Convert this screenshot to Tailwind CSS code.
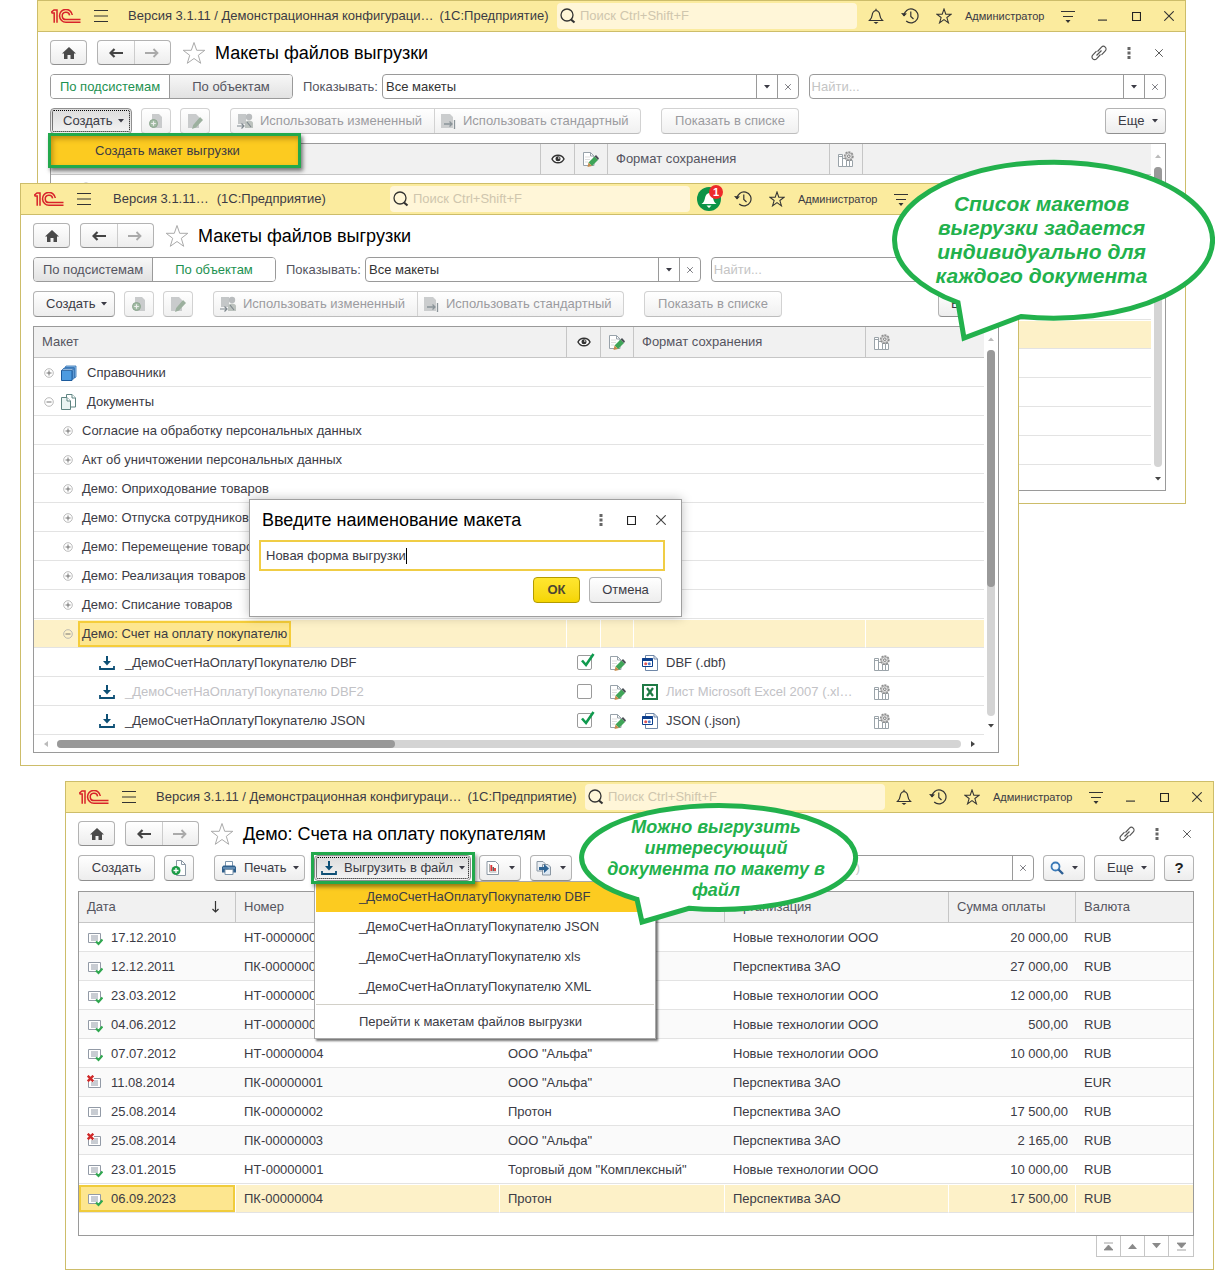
<!DOCTYPE html>
<html lang="ru">
<head>
  <meta charset="UTF-8" />
  <meta name="viewport" content="width=device-width, initial-scale=1.0" />
  <title>Макеты файлов выгрузки</title>
  <script src="https://cdn.jsdelivr.net/npm/@tailwindcss/browser@4"></script>
</head>
<body class="bg-white font-['Liberation_Sans',Arial,sans-serif] text-[13px] leading-4 text-[#3b3b45]">

  <!-- Icon sprite -->
  <svg class="hidden" xmlns="http://www.w3.org/2000/svg">
    <symbol id="logo" viewBox="0 0 30 14">
      <g fill="none" stroke="#d8232a" stroke-width="1.5">
        <path d="M0 3.500L3 1H6V13.800M0.500 4H3.200V13.800" />
        <path d="M21.300 6A6.400 6.400 0 1 0 15 13.200H29.500" />
        <path d="M18.600 6.300A3.700 3.700 0 1 0 15 10.600H29.500" />
      </g>
    </symbol>
    <symbol id="burger" viewBox="0 0 14 12"><path d="M0 .5h14M0 6h14M0 11.5h14" stroke="#333" stroke-width="1" /></symbol>
    <symbol id="search" viewBox="0 0 16 16"><circle cx="7" cy="7" r="6" fill="none" stroke="#333" stroke-width="1.3" /><path d="M11 11.500l3.500 3" stroke="#333" stroke-width="2.2" /></symbol>
    <symbol id="bell" viewBox="0 0 16 16"><path d="M1.500 12.500h13c-2-2-2.500-3.500-2.700-5.500-.2-2.500-1.300-4-3.800-4.500-2.500.5-3.600 2-3.800 4.500-.2 2-.7 3.500-2.700 5.500zM8 .8v1.700" fill="none" stroke="#333" stroke-width="1.200" /><path d="M5.500 14h5L8 16z" fill="#333" /></symbol>
    <symbol id="bell-on" viewBox="0 0 24 24"><circle cx="12" cy="12" r="12" fill="#0c9347" /><path d="M4.500 17h15c-2.500-1.500-3-4-3.500-6-.5-2.500-1.500-4.500-4-5-2.500.5-3.500 2.500-4 5-.5 2-1 4.500-3.500 6zM9.500 18.500h5L12 21z" fill="#fff" /></symbol>
    <symbol id="history" viewBox="0 0 18 16"><path d="M3 8A7 7 0 1 1 5.200 13M3 8A7 7 0 0 1 4.300 4M9.800 3.500V8.500L12.500 11" fill="none" stroke="#333" stroke-width="1.200" /><path d="M0 5l3 3.500L6 5.500z" fill="#333" /></symbol>
    <symbol id="star" viewBox="0 0 24 24"><path d="M12 1.500l2.700 7.800h8.100l-6.500 5 2.400 8L12 17.500l-6.700 4.800 2.400-8-6.500-5h8.100z" fill="none" stroke="currentColor" stroke-width="var(--sw,1)" /></symbol>
    <symbol id="service" viewBox="0 0 14 13"><path d="M0 1.500h14M2 6.500h10" stroke="#333" stroke-width="1.200" /><path d="M4.500 10h5L7 13z" fill="#333" /></symbol>
    <symbol id="min" viewBox="0 0 10 10"><path d="M0 9h10" stroke="#333" stroke-width="1.300" /></symbol>
    <symbol id="max" viewBox="0 0 10 10"><path d="M.6.6h8.800v8.800H.6z" fill="none" stroke="#222" stroke-width="1.200" /></symbol>
    <symbol id="close" viewBox="0 0 10 10"><path d="M.3.3l9.400 9.400M9.700.3L.3 9.700" stroke="currentColor" stroke-width="1.100" /></symbol>
    <symbol id="home" viewBox="0 0 14 12"><path d="M7 0L0 6.500h2V12h3.500V8h3v4H12V6.500h2z" fill="#4a4a4a" /></symbol>
    <symbol id="back" viewBox="0 0 14 10"><path d="M2 5h12M5.500 1L1.500 5l4 4" fill="none" stroke="currentColor" stroke-width="2.200" /></symbol>
    <symbol id="fwd" viewBox="0 0 14 10"><path d="M12 5H0M8.500 1l4 4-4 4" fill="none" stroke="currentColor" stroke-width="1.800" /></symbol>
    <symbol id="link" viewBox="0 0 16 16"><g fill="none" stroke="#555" stroke-width="1.200"><path d="M6.500 6.500L10.500 2.200a2.600 2.600 0 0 1 3.800 3.600L10.500 9.800M9 10.800" /><path d="M9.500 9.500L5.500 13.800a2.600 2.600 0 0 1-3.800-3.600L5.500 6.200M5.500 10.500l5-5" /></g></symbol>
    <symbol id="dots" viewBox="0 0 4 12"><path d="M.5 0h3v3h-3zM.5 4.500h3v3h-3zM.5 9h3v3h-3z" fill="#666" /></symbol>
    <symbol id="down" viewBox="0 0 6 4"><path d="M0 0h6L3 3.500z" fill="currentColor" /></symbol>
    <symbol id="up" viewBox="0 0 6 4"><path d="M0 4h6L3 .5z" fill="currentColor" /></symbol>
    <symbol id="doc-plus" viewBox="0 0 16 16"><path d="M5.500.5h5L14.500 4.500v11h-9z" fill="#fff" stroke="#8a97a3" /><path d="M10.500.5v4h4" fill="none" stroke="#8a97a3" /><circle cx="5" cy="10.500" r="4.500" fill="#1b9b46" /><path d="M5 8v5M2.500 10.500h5" stroke="#fff" stroke-width="1.300" /></symbol>
    <symbol id="doc-plus-off" viewBox="0 0 16 16"><path d="M4 1h7l3 3v11H4z" fill="#c9cbcc" /><circle cx="5.500" cy="10.500" r="4" fill="#a3bda5" stroke="#8ca58f" /><path d="M5.500 8.200v4.600M3.200 10.500h4.600" stroke="#eee" stroke-width="1.200" /></symbol>
    <symbol id="doc-edit-off" viewBox="0 0 16 16"><path d="M1 1h8l3 3v11H1z" fill="#c9cbcc" /><path d="M13 4l3 3-7 7.500-4 1.500 1.200-4z" fill="#9cb09e" /></symbol>
    <symbol id="doc-edit" viewBox="0 0 16 16"><path d="M.5 1.500h7l3.500 3.500v9.500H.5z" fill="#fff" stroke="#98a2aa" /><path d="M7.500 1.500V5H11" fill="none" stroke="#98a2aa" /><path d="M2 6h5M2 8.500h5M2 11h3" stroke="#ddd" /><path d="M11.500 5.500l3.500 3.500-6 6-3.500-3.500z" fill="#3fa558" /><path d="M11.500 5.500L13 4l3 3.300L15 9z" fill="#4a4f55" /><path d="M5.500 11.500L9 15l-4.500 1z" fill="#c58b4a" /></symbol>
    <symbol id="doc-user" viewBox="0 0 16 16"><path d="M1 1h8v10H1z" fill="#c4c7c8" /><circle cx="12" cy="4" r="3.200" fill="#b9bcbe" /><path d="M8 15V10c0-3.500 8-3.500 8 0v5z" fill="#bcc2be" /><path d="M0 13h7M4.500 10.500L7 13l-2.500 2.500M10 9l4 5" stroke="#7f888e" fill="none" stroke-width="1.200" /></symbol>
    <symbol id="doc-std" viewBox="0 0 16 16"><path d="M1 1h9l3 3v11H1z" fill="#cbcdce" /><path d="M4 11h8M9.500 8.500L12 11l-2.500 2.500M14.500 7v9" stroke="#8b9499" fill="none" stroke-width="1.300" /></symbol>
    <symbol id="eye" viewBox="0 0 14 10"><path d="M1 5c2.500-5 9.500-5 12 0-2.500 5-9.500 5-12 0z" fill="#fff" stroke="#333" stroke-width="1.500" /><circle cx="7" cy="4.800" r="2.500" fill="#333" /><circle cx="7.800" cy="4" r=".8" fill="#fff" /></symbol>
    <symbol id="columns" viewBox="0 0 16 16"><path d="M.5 3.500h4v12h-4zM4.500 7.500h4v8h-4zM8.500 9.500h6v6h-6zM11.500 10v5" fill="#fff" stroke="#9aa3a9" /><path d="M1 5.500h3" stroke="#9aa3a9" /><circle cx="10.800" cy="5.200" r="4" fill="#ddd" stroke="#8f8f8f" stroke-width="1.800" stroke-dasharray="2 1" /><circle cx="10.800" cy="5.200" r="3.200" fill="#e8e8e8" stroke="#999" stroke-width=".7" /><circle cx="10.800" cy="5.200" r="1.300" fill="#fff" stroke="#777" /></symbol>
    <symbol id="plus" viewBox="0 0 10 10"><circle cx="5" cy="5" r="4.300" fill="#fff" stroke="#aaa" stroke-width=".8" /><path d="M2.500 5h5M5 2.500v5" stroke="#666" stroke-width=".9" /></symbol>
    <symbol id="minus" viewBox="0 0 10 10"><circle cx="5" cy="5" r="4.300" fill="none" stroke="#aaa" stroke-width=".8" /><path d="M2.500 5h5" stroke="#666" stroke-width=".9" /></symbol>
    <symbol id="books" viewBox="0 0 16 16"><path d="M5 1h10v11l-1.500 1V2.500H4z" fill="#9cc6ee" stroke="#2a6cb0" stroke-width=".8" /><path d="M3 3h10v10.500l-1.500 1V4.500H2z" fill="#85b8ea" stroke="#2a6cb0" stroke-width=".8" /><path d="M.5 5.500h10.500v10H.5z" fill="#4d9be0" stroke="#1c5a9c" /><path d="M.5 5.500L2 4h10.500L11 5.500z" fill="#d6e9fa" stroke="#1c5a9c" stroke-width=".7" /></symbol>
    <symbol id="docs" viewBox="0 0 16 16"><g fill="#fff" stroke="#5f8582"><path d="M5.500.5h5.500l3.500 3.500v9h-9z" /><path d="M11 .5V4h3.500" /><path d="M.5 3.500h5.500l3.500 3.500v8.500h-9z" fill="#eaf4f3" /><path d="M6 3.500V7h3.500" /></g></symbol>
    <symbol id="load" viewBox="0 0 16 14"><path d="M1 10v3h14v-3" fill="none" stroke="#0d4f75" stroke-width="1.800" /><path d="M8 0v6" stroke="#0d4f75" stroke-width="2" /><path d="M4 5h8L8 9.500z" fill="#0d4f75" /></symbol>
    <symbol id="file-dbf" viewBox="0 0 16 16"><path d="M3.500.5h8.500l3.500 3.500v11.500h-12z" fill="#fff" stroke="#6f87a8" /><path d="M12 .5V4h3.500" fill="none" stroke="#6f87a8" /><path d="M.5 3.500h10v8H.5z" fill="#fff" stroke="#0d3f8c" /><path d="M.5 3h10v3H.5z" fill="#0d3f8c" /><circle cx="3.700" cy="8.700" r="1.500" fill="#e05555" /><circle cx="7.300" cy="8.700" r="1.500" fill="#4b7bd0" /></symbol>
    <symbol id="file-xls" viewBox="0 0 16 16"><path d="M1 1h14v14H1z" fill="#fff" stroke="#1f7a45" stroke-width="2" /><path d="M5 4l6 8M11 4l-6 8" stroke="#1f7a45" stroke-width="2.200" /></symbol>
    <symbol id="print" viewBox="0 0 16 16"><path d="M4.500 1.500h7v5h-7z" fill="#fff" stroke="#7a94ab" /><path d="M2.500 5.500h11l1.500 1.500v5.500H1V7z" fill="#2e5f8c" /><path d="M2 8h12" stroke="#8fb4d4" /><path d="M4 9.500h8v5H4z" fill="#fff" stroke="#7a94ab" /></symbol>
    <symbol id="report" viewBox="0 0 14 16"><path d="M1 1.500h8.500L12.500 4.500v10H1z" fill="#fff" stroke="#8a97a3" /><path d="M3.500 4v8h7" fill="none" stroke="#aaa" /><path d="M5.300 5v6M9 8v3" stroke="#d33" stroke-width="1.800" /><path d="M7.200 7v4" stroke="#444" stroke-width="1.300" /></symbol>
    <symbol id="based" viewBox="0 0 16 16"><path d="M1 1.500h6l2 2V11H1z" fill="#e9eef3" stroke="#8a97a3" /><path d="M6.500 4.500h5.500l2.500 2.500v8h-8z" fill="#dbe7f2" stroke="#8a97a3" /><path d="M3 7h5V4l5 4.500L8 13v-3H3z" fill="#2e6494" /></symbol>
    <symbol id="find" viewBox="0 0 14 14"><circle cx="5.500" cy="5.500" r="4" fill="#f2f8fd" stroke="#3a7ab8" stroke-width="1.800" /><path d="M8.500 8.500L13 13" stroke="#2d5f94" stroke-width="2.400" /></symbol>
    <symbol id="row-doc" viewBox="0 0 16 16"><path d="M1.500 3.500h12v9h-12z" fill="#fff" stroke="#929aa6" /><path d="M4 6h7M4 8h7M4 10h7" stroke="#929aa6" /></symbol>
    <symbol id="row-ok" viewBox="0 0 16 16"><use href="#row-doc" /><path d="M9 11.500l2.500 2.500L15.500 9.500" fill="none" stroke="#2fa84f" stroke-width="2.200" /></symbol>
    <symbol id="row-del" viewBox="0 0 16 16"><use href="#row-doc" /><path d="M0 0h7v7H0z" fill="#fff" /><path d="M.7.700l5.600 5.600M6.300.7L.7 6.300" stroke="#cf2a2a" stroke-width="2.400" /></symbol>
    <symbol id="check" viewBox="0 0 16 16"><path d="M3 7.500l4 4.500L14.500 1" fill="none" stroke="#0f9a4e" stroke-width="2.600" /></symbol>
  </svg>

  <main class="relative pb-4">
    <section class="relative grid">

      <!-- Window: templates by subsystem -->
      <article class="[grid-area:1/1] self-start ml-[37px] mr-[41px] border border-[#cdbd6a] bg-white">
        <header class="flex h-[31px] items-center border-b border-[#cdbd6a] bg-[#fbeb9e] pl-[13px]">
          <svg class="h-[14px] w-[30px] shrink-0"><use href="#logo" /></svg>
          <button class="ml-[13px] shrink-0" aria-label="Меню"><svg class="h-3 w-[14px]"><use href="#burger" /></svg></button>
          <span class="ml-5 whitespace-nowrap">Версия 3.1.11 / Демонстрационная конфигураци…</span>
          <span class="ml-[6px] whitespace-nowrap">(1С:Предприятие)</span>
          <label class="ml-auto flex h-[26px] w-[300px] shrink-0 items-center gap-1 rounded-sm bg-[#fff6d8] pl-[3px]">
            <svg class="size-4"><use href="#search" /></svg>
            <input type="text" placeholder="Поиск Ctrl+Shift+F" aria-label="Поиск" class="min-w-0 flex-1 outline-none placeholder:text-[#cfc6ae]" />
          </label>
          <button class="ml-0.5 grid w-[34px] shrink-0 place-items-center" aria-label="Оповещения"><svg class="size-4"><use href="#bell" /></svg></button>
          <button class="grid w-[34px] shrink-0 place-items-center" aria-label="История"><svg class="h-4 w-[18px]"><use href="#history" /></svg></button>
          <button class="grid w-[34px] shrink-0 place-items-center text-[#333] [--sw:1.6]" aria-label="Избранное"><svg class="size-4"><use href="#star" /></svg></button>
          <span class="w-[90px] shrink-0 px-1 text-[11px]">Администратор</span>
          <button class="grid w-[34px] shrink-0 place-items-center" aria-label="Сервис"><svg class="h-[13px] w-[14px]"><use href="#service" /></svg></button>
          <button class="grid w-[34px] shrink-0 place-items-center" aria-label="Свернуть"><svg class="size-[9px]"><use href="#min" /></svg></button>
          <button class="grid w-[34px] shrink-0 place-items-center" aria-label="Развернуть"><svg class="size-[9px]"><use href="#max" /></svg></button>
          <button class="grid w-8 shrink-0 place-items-center text-[#333]" aria-label="Закрыть"><svg class="size-[10px]"><use href="#close" /></svg></button>
        </header>
        <div class="pl-3 pr-[19px] pb-3 pt-2">
          <div class="flex h-[25px] items-center">
            <button class="grid h-[25px] w-[37px] place-items-center rounded-sm border border-[#b3b3b3] border-b-[#8f8f8f] bg-linear-to-b from-white to-[#ededed]" aria-label="Домой"><svg class="h-3 w-[14px]"><use href="#home" /></svg></button>
            <div class="ml-[10px] flex h-[25px] w-[74px] rounded-sm border border-[#b3b3b3] border-b-[#8f8f8f] bg-linear-to-b from-white to-[#ededed]">
              <button class="grid flex-1 place-items-center border-r border-[#ccc] text-[#444]" aria-label="Назад"><svg class="h-[10px] w-[14px]"><use href="#back" /></svg></button>
              <button class="grid flex-1 place-items-center text-[#aaa]" aria-label="Вперед"><svg class="h-[10px] w-[14px]"><use href="#fwd" /></svg></button>
            </div>
            <svg class="ml-[11px] size-6 text-[#aaa]"><use href="#star" /></svg>
            <h1 class="ml-[9px] whitespace-nowrap text-[18px] leading-6 text-black">Макеты файлов выгрузки</h1>
            <div class="-mr-2 ml-auto flex items-center">
              <button class="grid w-[30px] place-items-center" aria-label="Ссылка"><svg class="size-4"><use href="#link" /></svg></button>
              <button class="grid w-[30px] place-items-center" aria-label="Еще"><svg class="h-3 w-1"><use href="#dots" /></svg></button>
              <button class="grid h-6 w-[30px] place-items-center text-[#444]" aria-label="Закрыть"><svg class="size-2"><use href="#close" /></svg></button>
            </div>
          </div>
          <div class="mt-[9px] flex h-[25px] items-stretch">
            <div class="flex w-[243px] shrink-0 overflow-hidden rounded-sm border border-[#9a9a9a]">
              <button class="w-[119px] border-r border-[#9a9a9a] bg-white text-[#1d9150]">По подсистемам</button>
              <button class="flex-1 bg-linear-to-b from-[#f7f7f7] to-[#e2e2e2] text-[#55555f]">По объектам</button>
            </div>
            <label for="show1" class="ml-[10px] w-[79px] shrink-0 self-center text-[#55555f]">Показывать:</label>
            <div class="flex min-w-0 flex-[7] rounded-sm border border-[#9a9a9a]">
              <select id="show1" class="min-w-0 flex-1 appearance-none px-[3px] text-[#333] outline-none"><option>Все макеты</option></select>
              <button class="grid w-[21px] place-items-center border-l border-[#9a9a9a]" aria-label="Выбрать"><svg class="h-1 w-[6px]"><use href="#down" /></svg></button>
              <button class="grid w-[21px] place-items-center border-l border-[#9a9a9a]" aria-label="Очистить"><svg class="size-[6px]"><use href="#close" /></svg></button>
            </div>
            <div class="ml-[10px] flex min-w-0 flex-[6] rounded-sm border border-[#9a9a9a]">
              <input type="text" placeholder="Найти..." aria-label="Найти" class="min-w-0 flex-1 px-0.5 outline-none placeholder:text-[#c4c4c4]" />
              <button class="grid w-[21px] place-items-center border-l border-[#9a9a9a]" aria-label="Выбрать"><svg class="h-1 w-[6px]"><use href="#down" /></svg></button>
              <button class="grid w-[21px] place-items-center border-l border-[#9a9a9a]" aria-label="Очистить"><svg class="size-[6px]"><use href="#close" /></svg></button>
            </div>
          </div>
          <div class="mt-[9px] flex h-[26px] items-stretch">
            <div class="relative w-[82px] shrink-0">
              <button class="flex h-full w-full items-center gap-[6px] rounded-sm border border-[#8f8f8f] bg-linear-to-b from-[#dcdcdc] to-[#f4f4f4] pl-3 outline-1 outline-dotted -outline-offset-3 outline-black">Создать <svg class="h-1 w-[6px]"><use href="#down" /></svg></button>
              <!-- Create menu -->
              <div class="absolute -left-[2px] top-[25px] z-10 w-[253px] border-3 border-[#22a94c] bg-[#fccb20] shadow-[2px_3px_4px_rgba(0,0,0,0.5),inset_2px_3px_5px_rgba(120,80,0,0.45)]">
                <button class="block h-[29px] w-full pl-11 text-left">Создать макет выгрузки</button>
              </div>
            </div>
            <button disabled class="ml-[9px] grid w-[30px] shrink-0 place-items-center rounded-sm border border-[#d2d2d2] border-b-[#bdbdbd] bg-linear-to-b from-white to-[#f0f0f0]" aria-label="Добавить"><svg class="size-4"><use href="#doc-plus-off" /></svg></button>
            <button disabled class="ml-[9px] grid w-[30px] shrink-0 place-items-center rounded-sm border border-[#d2d2d2] border-b-[#bdbdbd] bg-linear-to-b from-white to-[#f0f0f0]" aria-label="Изменить"><svg class="size-4"><use href="#doc-edit-off" /></svg></button>
            <div class="ml-5 flex shrink-0 rounded-sm border border-[#d2d2d2] border-b-[#bdbdbd] bg-linear-to-b from-white to-[#f0f0f0] text-[#9b9b9f]">
              <button disabled class="flex w-[204px] items-center gap-[7px] whitespace-nowrap border-r border-[#d2d2d2] pl-[6px]"><svg class="size-4"><use href="#doc-user" /></svg>Использовать измененный</button>
              <button disabled class="flex w-[205px] items-center gap-[7px] whitespace-nowrap pl-[5px]"><svg class="size-4"><use href="#doc-std" /></svg>Использовать стандартный</button>
            </div>
            <button disabled class="ml-5 w-[138px] shrink-0 whitespace-nowrap rounded-sm border border-[#d2d2d2] border-b-[#bdbdbd] bg-linear-to-b from-white to-[#f0f0f0] text-[#9b9b9f]">Показать в списке</button>
            <button class="ml-auto flex w-[61px] shrink-0 items-center gap-2 rounded-sm border border-[#b3b3b3] border-b-[#8f8f8f] bg-linear-to-b from-white to-[#ededed] pl-3">Еще <svg class="h-1 w-[6px]"><use href="#down" /></svg></button>
          </div>
          <div class="mt-[9px] flex border border-[#9a9a9a] pb-[25px]">
            <table class="w-full table-fixed border-separate border-spacing-0 text-left [&_td]:h-[29px] [&_td]:border-b [&_td]:border-[#e3e3e3] [&_td]:p-0 [&_th]:h-[31px] [&_th]:border-b [&_th]:border-[#c6c6c6] [&_th]:bg-[#f1f1f1] [&_th]:p-0 [&_th]:font-normal [&_th]:text-[#55555f] [&_th:not(:last-child)]:border-r">
              <colgroup><col /><col class="w-[34px]" /><col class="w-[33px]" /><col class="w-[222px]" /><col class="w-[33px]" /><col class="w-[288px]" /></colgroup>
              <thead>
                <tr><th></th><th><svg class="mx-auto h-[10px] w-[14px]"><use href="#eye" /></svg></th><th><svg class="mx-auto size-4"><use href="#doc-edit" /></svg></th><th><span class="pl-2">Формат сохранения</span></th><th><svg class="mx-auto size-4"><use href="#columns" /></svg></th><th></th></tr>
              </thead>
              <tbody>
                <tr><td><svg class="ml-7 size-[14px]"><use href="#plus" /></svg></td><td colspan="5"></td></tr>
                <tr><td colspan="6"></td></tr>
                <tr><td colspan="6"></td></tr>
                <tr><td colspan="6"></td></tr>
                <tr><td colspan="6"></td></tr>
                <tr class="[&_td]:border-t [&_td]:border-t-white [&_td]:bg-[#fdf1c8]"><td colspan="6"></td></tr>
                <tr><td colspan="6"></td></tr>
                <tr><td colspan="6"></td></tr>
                <tr><td colspan="6"></td></tr>
                <tr><td colspan="6"></td></tr>
              </tbody>
            </table>
            <div class="-mb-[25px] flex w-[14px] shrink-0 flex-col items-center">
              <span class="grid h-[23px] place-items-center text-[#bbb]"><svg class="h-1 w-[6px]"><use href="#up" /></svg></span>
              <div class="w-2 flex-1 rounded-full bg-[#d4d4d4]"><div class="h-20 rounded-full bg-[#999]"></div></div>
              <span class="grid h-[23px] place-items-center text-[#444]"><svg class="h-1 w-[6px]"><use href="#down" /></svg></span>
            </div>
          </div>
        </div>
      </article>

      <!-- Window: templates by object -->
      <article class="relative [grid-area:1/1] self-start mt-[183px] ml-5 mr-[208px] border border-[#cdbd6a] bg-white">
        <header class="flex h-[31px] items-center border-b border-[#cdbd6a] bg-[#fbeb9e] pl-[13px]">
          <svg class="h-[14px] w-[30px] shrink-0"><use href="#logo" /></svg>
          <button class="ml-[13px] shrink-0" aria-label="Меню"><svg class="h-3 w-[14px]"><use href="#burger" /></svg></button>
          <span class="ml-[22px] whitespace-nowrap">Версия 3.1.11…</span>
          <span class="ml-2 whitespace-nowrap">(1С:Предприятие)</span>
          <label class="ml-auto flex h-[26px] w-[300px] shrink-0 items-center gap-1 rounded-sm bg-[#fff6d8] pl-[3px]">
            <svg class="size-4"><use href="#search" /></svg>
            <input type="text" placeholder="Поиск Ctrl+Shift+F" aria-label="Поиск" class="min-w-0 flex-1 outline-none placeholder:text-[#cfc6ae]" />
          </label>
          <button class="relative ml-0.5 grid w-[34px] shrink-0 place-items-center" aria-label="Оповещения">
            <svg class="size-6"><use href="#bell-on" /></svg>
            <span class="absolute -top-[2px] left-[17px] size-[14px] rounded-full bg-[#ee2a2a] text-center text-[11px] font-bold leading-[14px] text-white">1</span>
          </button>
          <button class="grid w-[34px] shrink-0 place-items-center" aria-label="История"><svg class="h-4 w-[18px]"><use href="#history" /></svg></button>
          <button class="grid w-[34px] shrink-0 place-items-center text-[#333] [--sw:1.6]" aria-label="Избранное"><svg class="size-4"><use href="#star" /></svg></button>
          <span class="w-[90px] shrink-0 px-1 text-[11px]">Администратор</span>
          <button class="grid w-[34px] shrink-0 place-items-center" aria-label="Сервис"><svg class="h-[13px] w-[14px]"><use href="#service" /></svg></button>
          <button class="grid w-[34px] shrink-0 place-items-center" aria-label="Свернуть"><svg class="size-[9px]"><use href="#min" /></svg></button>
          <button class="grid w-[34px] shrink-0 place-items-center" aria-label="Развернуть"><svg class="size-[9px]"><use href="#max" /></svg></button>
          <button class="grid w-8 shrink-0 place-items-center text-[#333]" aria-label="Закрыть"><svg class="size-[10px]"><use href="#close" /></svg></button>
        </header>
        <div class="pl-3 pr-[19px] pb-3 pt-2">
          <div class="flex h-[25px] items-center">
            <button class="grid h-[25px] w-[37px] place-items-center rounded-sm border border-[#b3b3b3] border-b-[#8f8f8f] bg-linear-to-b from-white to-[#ededed]" aria-label="Домой"><svg class="h-3 w-[14px]"><use href="#home" /></svg></button>
            <div class="ml-[10px] flex h-[25px] w-[74px] rounded-sm border border-[#b3b3b3] border-b-[#8f8f8f] bg-linear-to-b from-white to-[#ededed]">
              <button class="grid flex-1 place-items-center border-r border-[#ccc] text-[#444]" aria-label="Назад"><svg class="h-[10px] w-[14px]"><use href="#back" /></svg></button>
              <button class="grid flex-1 place-items-center text-[#aaa]" aria-label="Вперед"><svg class="h-[10px] w-[14px]"><use href="#fwd" /></svg></button>
            </div>
            <svg class="ml-[11px] size-6 text-[#aaa]"><use href="#star" /></svg>
            <h2 class="ml-[9px] whitespace-nowrap text-[18px] leading-6 text-black">Макеты файлов выгрузки</h2>
          </div>
          <div class="mt-[9px] flex h-[25px] items-stretch">
            <div class="flex w-[243px] shrink-0 overflow-hidden rounded-sm border border-[#9a9a9a]">
              <button class="w-[119px] border-r border-[#9a9a9a] bg-linear-to-b from-[#f7f7f7] to-[#e2e2e2] text-[#55555f]">По подсистемам</button>
              <button class="flex-1 bg-white text-[#1d9150]">По объектам</button>
            </div>
            <label for="show2" class="ml-[10px] w-[79px] shrink-0 self-center text-[#55555f]">Показывать:</label>
            <div class="flex min-w-0 flex-[7] rounded-sm border border-[#9a9a9a]">
              <select id="show2" class="min-w-0 flex-1 appearance-none px-[3px] text-[#333] outline-none"><option>Все макеты</option></select>
              <button class="grid w-[21px] place-items-center border-l border-[#9a9a9a]" aria-label="Выбрать"><svg class="h-1 w-[6px]"><use href="#down" /></svg></button>
              <button class="grid w-[21px] place-items-center border-l border-[#9a9a9a]" aria-label="Очистить"><svg class="size-[6px]"><use href="#close" /></svg></button>
            </div>
            <div class="ml-[10px] flex min-w-0 flex-[6] rounded-sm border border-[#9a9a9a]">
              <input type="text" placeholder="Найти..." aria-label="Найти" class="min-w-0 flex-1 px-0.5 outline-none placeholder:text-[#c4c4c4]" />
            </div>
          </div>
          <div class="mt-[9px] flex h-[26px] items-stretch">
            <button class="flex w-[82px] shrink-0 items-center gap-[6px] rounded-sm border border-[#b3b3b3] border-b-[#8f8f8f] bg-linear-to-b from-white to-[#ededed] pl-3">Создать <svg class="h-1 w-[6px]"><use href="#down" /></svg></button>
            <button disabled class="ml-[9px] grid w-[30px] shrink-0 place-items-center rounded-sm border border-[#d2d2d2] border-b-[#bdbdbd] bg-linear-to-b from-white to-[#f0f0f0]" aria-label="Добавить"><svg class="size-4"><use href="#doc-plus-off" /></svg></button>
            <button disabled class="ml-[9px] grid w-[30px] shrink-0 place-items-center rounded-sm border border-[#d2d2d2] border-b-[#bdbdbd] bg-linear-to-b from-white to-[#f0f0f0]" aria-label="Изменить"><svg class="size-4"><use href="#doc-edit-off" /></svg></button>
            <div class="ml-5 flex shrink-0 rounded-sm border border-[#d2d2d2] border-b-[#bdbdbd] bg-linear-to-b from-white to-[#f0f0f0] text-[#9b9b9f]">
              <button disabled class="flex w-[204px] items-center gap-[7px] whitespace-nowrap border-r border-[#d2d2d2] pl-[6px]"><svg class="size-4"><use href="#doc-user" /></svg>Использовать измененный</button>
              <button disabled class="flex w-[205px] items-center gap-[7px] whitespace-nowrap pl-[5px]"><svg class="size-4"><use href="#doc-std" /></svg>Использовать стандартный</button>
            </div>
            <button disabled class="ml-5 w-[138px] shrink-0 whitespace-nowrap rounded-sm border border-[#d2d2d2] border-b-[#bdbdbd] bg-linear-to-b from-white to-[#f0f0f0] text-[#9b9b9f]">Показать в списке</button>
            <button class="ml-auto flex w-[61px] shrink-0 items-center gap-2 rounded-sm border border-[#b3b3b3] border-b-[#8f8f8f] bg-linear-to-b from-white to-[#ededed] pl-3">Еще <svg class="h-1 w-[6px]"><use href="#down" /></svg></button>
          </div>
          <div class="mt-[9px] border border-[#9a9a9a]">
            <div class="flex">
              <table class="w-full table-fixed border-separate border-spacing-0 text-left [&_td]:h-[29px] [&_td]:border-b [&_td]:border-[#e3e3e3] [&_td]:px-0 [&_td]:pb-0 [&_td]:pt-px [&_td>div]:flex [&_td>div]:items-center [&_th]:h-[31px] [&_th]:border-b [&_th]:border-[#c6c6c6] [&_th]:bg-[#f1f1f1] [&_th]:p-0 [&_th]:font-normal [&_th]:text-[#55555f] [&_th:not(:last-child)]:border-r">
                <colgroup><col /><col class="w-[34px]" /><col class="w-[33px]" /><col class="w-[232px]" /><col class="w-[118px]" /></colgroup>
                <thead>
                  <tr><th><span class="pl-2">Макет</span></th><th><svg class="mx-auto h-[10px] w-[14px]"><use href="#eye" /></svg></th><th><svg class="mx-auto size-4"><use href="#doc-edit" /></svg></th><th><span class="pl-2">Формат сохранения</span></th><th><svg class="ml-2 size-4"><use href="#columns" /></svg></th></tr>
                </thead>
                <tbody>
                  <tr><td colspan="5"><div class="pl-[10px]"><svg class="size-[10px]"><use href="#plus" /></svg><svg class="ml-[7px] mr-[10px] size-4"><use href="#books" /></svg>Справочники</div></td></tr>
                  <tr><td colspan="5"><div class="pl-[10px]"><svg class="size-[10px]"><use href="#minus" /></svg><svg class="ml-[7px] mr-[10px] size-4"><use href="#docs" /></svg>Документы</div></td></tr>
                  <tr><td colspan="5"><div class="gap-[9px] pl-[29px]"><svg class="size-[10px]"><use href="#plus" /></svg>Согласие на обработку персональных данных</div></td></tr>
                  <tr><td colspan="5"><div class="gap-[9px] pl-[29px]"><svg class="size-[10px]"><use href="#plus" /></svg>Акт об уничтожении персональных данных</div></td></tr>
                  <tr><td colspan="5"><div class="gap-[9px] pl-[29px]"><svg class="size-[10px]"><use href="#plus" /></svg>Демо: Оприходование товаров</div></td></tr>
                  <tr><td colspan="5"><div class="gap-[9px] pl-[29px]"><svg class="size-[10px]"><use href="#plus" /></svg>Демо: Отпуска сотрудников</div></td></tr>
                  <tr><td colspan="5"><div class="gap-[9px] pl-[29px]"><svg class="size-[10px]"><use href="#plus" /></svg>Демо: Перемещение товаров</div></td></tr>
                  <tr><td colspan="5"><div class="gap-[9px] pl-[29px]"><svg class="size-[10px]"><use href="#plus" /></svg>Демо: Реализация товаров</div></td></tr>
                  <tr><td colspan="5"><div class="gap-[9px] pl-[29px]"><svg class="size-[10px]"><use href="#plus" /></svg>Демо: Списание товаров</div></td></tr>
                  <tr class="[&_td]:border-t [&_td]:border-t-white [&_td]:bg-[#fdf1c8] [&_td]:pt-0! [&_td:not(:last-child)]:border-r [&_td:not(:last-child)]:border-r-white">
                    <td><div class="gap-[5px] pl-[29px]"><svg class="size-[10px]"><use href="#minus" /></svg><span class="whitespace-nowrap border-2 border-[#f5cd3a] bg-[#fde68f] px-0.5 py-[3px]">Демо: Счет на оплату покупателю</span></div></td>
                    <td></td><td></td><td></td><td></td>
                  </tr>
                  <tr>
                    <td><div class="gap-[10px] pl-[65px]"><svg class="h-[14px] w-4"><use href="#load" /></svg>_ДемоСчетНаОплатуПокупателю DBF</div></td>
                    <td><label class="relative mx-auto block size-[15px]"><input type="checkbox" checked aria-label="Использовать DBF" class="peer block size-[15px] appearance-none rounded-xs border border-[#9a9a9a]" /><svg class="absolute -top-0.5 left-0.5 hidden size-4 peer-checked:block"><use href="#check" /></svg></label></td>
                    <td><svg class="mx-auto size-4"><use href="#doc-edit" /></svg></td>
                    <td><div class="gap-2 pl-2"><svg class="size-4"><use href="#file-dbf" /></svg>DBF (.dbf)</div></td>
                    <td><svg class="ml-2 size-4"><use href="#columns" /></svg></td>
                  </tr>
                  <tr class="text-[#c2c2c6]">
                    <td><div class="gap-[10px] pl-[65px]"><svg class="h-[14px] w-4"><use href="#load" /></svg>_ДемоСчетНаОплатуПокупателю DBF2</div></td>
                    <td><label class="relative mx-auto block size-[15px]"><input type="checkbox" aria-label="Использовать DBF2" class="peer block size-[15px] appearance-none rounded-xs border border-[#9a9a9a]" /><svg class="absolute -top-0.5 left-0.5 hidden size-4 peer-checked:block"><use href="#check" /></svg></label></td>
                    <td><svg class="mx-auto size-4"><use href="#doc-edit" /></svg></td>
                    <td><div class="gap-2 pl-2"><svg class="size-4"><use href="#file-xls" /></svg>Лист Microsoft Excel 2007 (.xl…</div></td>
                    <td><svg class="ml-2 size-4"><use href="#columns" /></svg></td>
                  </tr>
                  <tr>
                    <td><div class="gap-[10px] pl-[65px]"><svg class="h-[14px] w-4"><use href="#load" /></svg>_ДемоСчетНаОплатуПокупателю JSON</div></td>
                    <td><label class="relative mx-auto block size-[15px]"><input type="checkbox" checked aria-label="Использовать JSON" class="peer block size-[15px] appearance-none rounded-xs border border-[#9a9a9a]" /><svg class="absolute -top-0.5 left-0.5 hidden size-4 peer-checked:block"><use href="#check" /></svg></label></td>
                    <td><svg class="mx-auto size-4"><use href="#doc-edit" /></svg></td>
                    <td><div class="gap-2 pl-2"><svg class="size-4"><use href="#file-dbf" /></svg>JSON (.json)</div></td>
                    <td><svg class="ml-2 size-4"><use href="#columns" /></svg></td>
                  </tr>
                </tbody>
              </table>
              <div class="flex w-[14px] shrink-0 flex-col items-center">
                <span class="grid h-[23px] place-items-center text-[#bbb]"><svg class="h-1 w-[6px]"><use href="#up" /></svg></span>
                <div class="w-2 flex-1 rounded-full bg-[#d4d4d4]"><div class="h-[237px] rounded-full bg-[#999]"></div></div>
                <span class="grid h-[19px] place-items-center text-[#444]"><svg class="h-1 w-[6px]"><use href="#down" /></svg></span>
              </div>
            </div>
            <div class="flex h-[17px] items-center pr-[14px]">
              <span class="grid w-[23px] place-items-center text-[#bbb]"><svg class="h-[6px] w-1" viewBox="0 0 4 6"><path d="M4 0v6L0 3z" fill="currentColor" /></svg></span>
              <div class="h-2 flex-1 rounded-full bg-[#d4d4d4]"><div class="h-2 w-[338px] rounded-full bg-[#999]"></div></div>
              <span class="grid w-[23px] place-items-center text-[#444]"><svg class="h-[6px] w-1" viewBox="0 0 4 6"><path d="M0 0v6l4-3z" fill="currentColor" /></svg></span>
            </div>
          </div>
        </div>

        <!-- Name dialog -->
        <form class="absolute left-[228px] top-[315px] w-[433px] border border-[#9f9f9f] bg-white px-[9px] pb-[13px] pt-2 shadow-[0_0_10px_rgba(0,0,0,0.25)]">
          <div class="-mr-1 flex h-6 items-center pl-[3px]">
            <label for="name" class="text-[18px] leading-6 text-black">Введите наименование макета</label>
            <button type="button" class="ml-auto grid w-[30px] place-items-center" aria-label="Еще"><svg class="h-3 w-1"><use href="#dots" /></svg></button>
            <button type="button" class="grid w-[30px] place-items-center" aria-label="Развернуть"><svg class="size-[9px]"><use href="#max" /></svg></button>
            <button type="button" class="grid w-[30px] place-items-center text-[#444]" aria-label="Закрыть"><svg class="size-[10px]"><use href="#close" /></svg></button>
          </div>
          <div class="mr-[7px] mt-2 flex h-[31px] items-center border-2 border-[#f0cd45] pl-[5px]">
            <input id="name" type="text" value="Новая форма выгрузки" class="field-sizing-content text-[#3b3b45] outline-none" />
            <span class="h-4 w-px bg-black"></span>
          </div>
          <div class="mr-[10px] mt-[6px] flex h-[26px] justify-end gap-[9px]">
            <button type="button" class="w-[47px] rounded-sm border border-[#b39b00] bg-linear-to-b from-[#ffe62e] to-[#f5d500] font-bold text-[#4c4632]">ОК</button>
            <button type="button" class="w-[73px] rounded-sm border border-[#b3b3b3] border-b-[#8f8f8f] bg-linear-to-b from-white to-[#ededed]">Отмена</button>
          </div>
        </form>
      </article>

      <!-- Callout -->
      <div class="absolute right-[12px] top-[157px] w-[327px]">
        <svg class="h-[186px] w-full" viewBox="0 0 327 186"><path d="M70 145.500A159 78 0 1 1 133 159.500L76 181Z" fill="#fff" stroke="#22b14c" stroke-width="5" /></svg>
        <p class="absolute inset-x-0 top-[35px] pr-[20px] text-center text-[21px] font-bold italic leading-[24px] text-[#22b14c]">Список макетов<br />выгрузки задается<br />индивидуально для<br />каждого документа</p>
      </div>
    </section>

    <!-- Window: customer invoices -->
    <article class="relative ml-[65px] mr-[13px] mt-[15px] border border-[#cdbd6a] bg-white">
      <header class="flex h-[31px] items-center border-b border-[#cdbd6a] bg-[#fbeb9e] pl-[13px]">
        <svg class="h-[14px] w-[30px] shrink-0"><use href="#logo" /></svg>
        <button class="ml-[13px] shrink-0" aria-label="Меню"><svg class="h-3 w-[14px]"><use href="#burger" /></svg></button>
        <span class="ml-5 whitespace-nowrap">Версия 3.1.11 / Демонстрационная конфигураци…</span>
        <span class="ml-[6px] whitespace-nowrap">(1С:Предприятие)</span>
        <label class="ml-auto flex h-[26px] w-[300px] shrink-0 items-center gap-1 rounded-sm bg-[#fff6d8] pl-[3px]">
          <svg class="size-4"><use href="#search" /></svg>
          <input type="text" placeholder="Поиск Ctrl+Shift+F" aria-label="Поиск" class="min-w-0 flex-1 outline-none placeholder:text-[#cfc6ae]" />
        </label>
        <button class="ml-0.5 grid w-[34px] shrink-0 place-items-center" aria-label="Оповещения"><svg class="size-4"><use href="#bell" /></svg></button>
        <button class="grid w-[34px] shrink-0 place-items-center" aria-label="История"><svg class="h-4 w-[18px]"><use href="#history" /></svg></button>
        <button class="grid w-[34px] shrink-0 place-items-center text-[#333] [--sw:1.6]" aria-label="Избранное"><svg class="size-4"><use href="#star" /></svg></button>
        <span class="w-[90px] shrink-0 px-1 text-[11px]">Администратор</span>
        <button class="grid w-[34px] shrink-0 place-items-center" aria-label="Сервис"><svg class="h-[13px] w-[14px]"><use href="#service" /></svg></button>
        <button class="grid w-[34px] shrink-0 place-items-center" aria-label="Свернуть"><svg class="size-[9px]"><use href="#min" /></svg></button>
        <button class="grid w-[34px] shrink-0 place-items-center" aria-label="Развернуть"><svg class="size-[9px]"><use href="#max" /></svg></button>
        <button class="grid w-8 shrink-0 place-items-center text-[#333]" aria-label="Закрыть"><svg class="size-[10px]"><use href="#close" /></svg></button>
      </header>
      <div class="pl-3 pr-[19px] pb-3 pt-2">
        <div class="flex h-[25px] items-center">
          <button class="grid h-[25px] w-[37px] place-items-center rounded-sm border border-[#b3b3b3] border-b-[#8f8f8f] bg-linear-to-b from-white to-[#ededed]" aria-label="Домой"><svg class="h-3 w-[14px]"><use href="#home" /></svg></button>
          <div class="ml-[10px] flex h-[25px] w-[74px] rounded-sm border border-[#b3b3b3] border-b-[#8f8f8f] bg-linear-to-b from-white to-[#ededed]">
            <button class="grid flex-1 place-items-center border-r border-[#ccc] text-[#444]" aria-label="Назад"><svg class="h-[10px] w-[14px]"><use href="#back" /></svg></button>
            <button class="grid flex-1 place-items-center text-[#aaa]" aria-label="Вперед"><svg class="h-[10px] w-[14px]"><use href="#fwd" /></svg></button>
          </div>
          <svg class="ml-[11px] size-6 text-[#aaa]"><use href="#star" /></svg>
          <h2 class="ml-[9px] whitespace-nowrap text-[18px] leading-6 text-black">Демо: Счета на оплату покупателям</h2>
          <div class="-mr-2 ml-auto flex items-center">
            <button class="grid w-[30px] place-items-center" aria-label="Ссылка"><svg class="size-4"><use href="#link" /></svg></button>
            <button class="grid w-[30px] place-items-center" aria-label="Еще"><svg class="h-3 w-1"><use href="#dots" /></svg></button>
            <button class="grid h-6 w-[30px] place-items-center text-[#444]" aria-label="Закрыть"><svg class="size-2"><use href="#close" /></svg></button>
          </div>
        </div>
        <div class="mt-[9px] flex h-[26px] items-stretch [&>*]:shrink-0">
          <button class="w-[77px] rounded-sm border border-[#b3b3b3] border-b-[#8f8f8f] bg-linear-to-b from-white to-[#ededed]">Создать</button>
          <button class="ml-[9px] grid w-[30px] place-items-center rounded-sm border border-[#b3b3b3] border-b-[#8f8f8f] bg-linear-to-b from-white to-[#ededed]" aria-label="Скопировать"><svg class="size-4"><use href="#doc-plus" /></svg></button>
          <button class="ml-5 flex w-[91px] items-center rounded-sm border border-[#b3b3b3] border-b-[#8f8f8f] bg-linear-to-b from-white to-[#ededed] pl-[6px]"><svg class="mr-[7px] size-4"><use href="#print" /></svg>Печать <svg class="ml-[6px] h-1 w-[6px]"><use href="#down" /></svg></button>
          <div class="relative ml-[9px] w-[157px]">
            <button class="flex h-full w-full items-center rounded-sm border border-[#8f8f8f] bg-linear-to-b from-[#dcdcdc] to-[#f4f4f4] pl-[6px] outline-1 outline-dotted -outline-offset-3 outline-black"><svg class="mr-[7px] h-[14px] w-4"><use href="#load" /></svg>Выгрузить в файл <svg class="ml-[6px] h-1 w-[6px]"><use href="#down" /></svg></button>
            <span class="absolute -bottom-[3px] -left-[3px] -right-1 -top-[3px] z-20 border-3 border-[#22a94c] shadow-[2px_3px_4px_rgba(0,0,0,0.4)]"></span>
            <!-- Export menu -->
            <div class="absolute left-0 top-[26px] z-10 w-[342px] border border-[#a8a8a8] bg-white px-px pb-px shadow-[2px_2px_2px_rgba(0,0,0,0.55)] [&>button]:block [&>button]:h-[30px] [&>button]:w-full [&>button]:pl-[43px] [&>button]:text-left">
              <button class="bg-[#fccb20]">_ДемоСчетНаОплатуПокупателю DBF</button>
              <button>_ДемоСчетНаОплатуПокупателю JSON</button>
              <button>_ДемоСчетНаОплатуПокупателю xls</button>
              <button>_ДемоСчетНаОплатуПокупателю XML</button>
              <hr class="my-0.5 border-[#d2d0c8]" />
              <button>Перейти к макетам файлов выгрузки</button>
            </div>
          </div>
          <button class="ml-2 flex w-[42px] items-center justify-center gap-[9px] rounded-sm border border-[#b3b3b3] border-b-[#8f8f8f] bg-linear-to-b from-white to-[#ededed]" aria-label="Отчеты"><svg class="h-4 w-[14px]"><use href="#report" /></svg><svg class="h-1 w-[6px]"><use href="#down" /></svg></button>
          <button class="ml-[9px] flex w-[42px] items-center justify-center gap-2 rounded-sm border border-[#b3b3b3] border-b-[#8f8f8f] bg-linear-to-b from-white to-[#ededed]" aria-label="Создать на основании"><svg class="size-4"><use href="#based" /></svg><svg class="h-1 w-[6px]"><use href="#down" /></svg></button>
          <div class="ml-auto flex w-[263px] rounded-sm border border-[#9a9a9a]">
            <input type="text" placeholder="Поиск (Ctrl+F)" aria-label="Поиск в списке" class="min-w-0 flex-1 px-1 outline-none placeholder:text-[#c4c4c4]" />
            <button class="grid w-[21px] place-items-center border-l border-[#9a9a9a]" aria-label="Очистить"><svg class="size-[6px]"><use href="#close" /></svg></button>
          </div>
          <button class="ml-[9px] flex w-[42px] items-center justify-center gap-2 rounded-sm border border-[#b3b3b3] border-b-[#8f8f8f] bg-linear-to-b from-white to-[#ededed]" aria-label="Найти"><svg class="size-[14px]"><use href="#find" /></svg><svg class="h-1 w-[6px]"><use href="#down" /></svg></button>
          <button class="ml-[9px] flex w-[61px] items-center gap-2 rounded-sm border border-[#b3b3b3] border-b-[#8f8f8f] bg-linear-to-b from-white to-[#ededed] pl-3">Еще <svg class="h-1 w-[6px]"><use href="#down" /></svg></button>
          <button class="ml-[9px] w-[30px] rounded-sm border border-[#b3b3b3] border-b-[#8f8f8f] bg-linear-to-b from-white to-[#ededed] text-[15px] font-bold text-[#222]">?</button>
        </div>
        <div class="mt-[10px] border border-[#9a9a9a] pb-[22px]">
          <table class="w-full table-fixed border-separate border-spacing-0 text-left [&_td]:h-[29px] [&_td]:border-b [&_td]:border-[#e3e3e3] [&_td]:px-2 [&_td]:pb-0 [&_td]:pt-px [&_td:nth-child(5)]:text-right [&_td>div]:flex [&_td>div]:items-center [&_td>div]:gap-2 [&_td_svg]:size-4 [&_th]:h-[31px] [&_th]:border-b [&_th]:border-[#c6c6c6] [&_th]:bg-[#f1f1f1] [&_th]:px-2 [&_th]:py-0 [&_th]:font-normal [&_th]:text-[#55555f] [&_th:not(:last-child)]:border-r">
            <colgroup><col class="w-[157px]" /><col class="w-[264px]" /><col class="w-[225px]" /><col /><col class="w-[127px]" /><col class="w-[117px]" /></colgroup>
            <thead>
              <tr><th><div class="flex items-center justify-between pr-2">Дата <svg class="h-3 w-[7px]" viewBox="0 0 7 12"><path d="M3.500 0v11M.5 8l3 3 3-3" fill="none" stroke="#333" stroke-width="1.200" /></svg></div></th><th>Номер</th><th></th><th>Организация</th><th>Сумма оплаты</th><th>Валюта</th></tr>
            </thead>
            <tbody class="[&_tr:nth-child(even)]:bg-[#fafafa]">
              <tr><td><div><svg><use href="#row-ok" /></svg>17.12.2010</div></td><td>НТ-00000002</td><td></td><td>Новые технологии ООО</td><td>20 000,00</td><td>RUB</td></tr>
              <tr><td><div><svg><use href="#row-ok" /></svg>12.12.2011</div></td><td>ПК-0000000</td><td></td><td>Перспектива ЗАО</td><td>27 000,00</td><td>RUB</td></tr>
              <tr><td><div><svg><use href="#row-ok" /></svg>23.03.2012</div></td><td>НТ-0000000</td><td></td><td>Новые технологии ООО</td><td>12 000,00</td><td>RUB</td></tr>
              <tr><td><div><svg><use href="#row-ok" /></svg>04.06.2012</div></td><td>НТ-00000003</td><td></td><td>Новые технологии ООО</td><td>500,00</td><td>RUB</td></tr>
              <tr><td><div><svg><use href="#row-ok" /></svg>07.07.2012</div></td><td>НТ-00000004</td><td>ООО "Альфа"</td><td>Новые технологии ООО</td><td>10 000,00</td><td>RUB</td></tr>
              <tr><td><div><svg><use href="#row-del" /></svg>11.08.2014</div></td><td>ПК-00000001</td><td>ООО "Альфа"</td><td>Перспектива ЗАО</td><td></td><td>EUR</td></tr>
              <tr><td><div><svg><use href="#row-doc" /></svg>25.08.2014</div></td><td>ПК-00000002</td><td>Протон</td><td>Перспектива ЗАО</td><td>17 500,00</td><td>RUB</td></tr>
              <tr><td><div><svg><use href="#row-del" /></svg>25.08.2014</div></td><td>ПК-00000003</td><td>ООО "Альфа"</td><td>Перспектива ЗАО</td><td>2 165,00</td><td>RUB</td></tr>
              <tr><td><div><svg><use href="#row-ok" /></svg>23.01.2015</div></td><td>НТ-00000001</td><td>Торговый дом "Комплексный"</td><td>Новые технологии ООО</td><td>10 000,00</td><td>RUB</td></tr>
              <tr class="[&_td]:border-t [&_td]:border-t-white [&_td]:bg-[#fdf1c8] [&_td]:pt-0! [&_td:not(:last-child)]:border-r [&_td:not(:last-child)]:border-r-white [&_td:nth-child(5)]:pr-[7px]"><td class="bg-[#fde68f]! shadow-[inset_0_0_0_2px_#f0cc3c]"><div><svg><use href="#row-ok" /></svg>06.09.2023</div></td><td>ПК-00000004</td><td>Протон</td><td>Перспектива ЗАО</td><td>17 500,00</td><td>RUB</td></tr>
            </tbody>
          </table>
        </div>
        <div class="flex justify-end">
          <div class="flex h-[21px] divide-x divide-[#c6c6c6] border border-t-0 border-[#c6c6c6] text-[#8a8a8a] [&>button]:grid [&>button]:w-6 [&>button]:place-items-center">
            <button aria-label="В начало"><svg class="size-[9px]" viewBox="0 0 9 9"><path d="M0 1h9M0 8h9L4.500 3z" fill="currentColor" stroke="currentColor" stroke-width=".8" /></svg></button>
            <button aria-label="Вверх"><svg class="h-[6px] w-[9px]"><use href="#up" /></svg></button>
            <button aria-label="Вниз"><svg class="h-[6px] w-[9px]"><use href="#down" /></svg></button>
            <button aria-label="В конец"><svg class="size-[9px]" viewBox="0 0 9 9"><path d="M0 8h9M0 1h9L4.500 6z" fill="currentColor" stroke="currentColor" stroke-width=".8" /></svg></button>
          </div>
        </div>
      </div>

      <!-- Callout -->
      <div class="absolute left-[511px] top-[19px] z-30 w-[284px]">
        <svg class="h-[128px] w-full" viewBox="0 0 284 128"><path d="M60 98.300A137 52 0 1 1 112 107.300L65 121Z" fill="#fff" stroke="#22b14c" stroke-width="5" /></svg>
        <p class="absolute inset-x-0 top-[16px] pr-[6px] text-center text-[18px] font-bold italic leading-[21px] text-[#22b14c]">Можно выгрузить<br />интересующий<br />документа по макету в<br />файл</p>
      </div>
    </article>
  </main>
</body>
</html>
